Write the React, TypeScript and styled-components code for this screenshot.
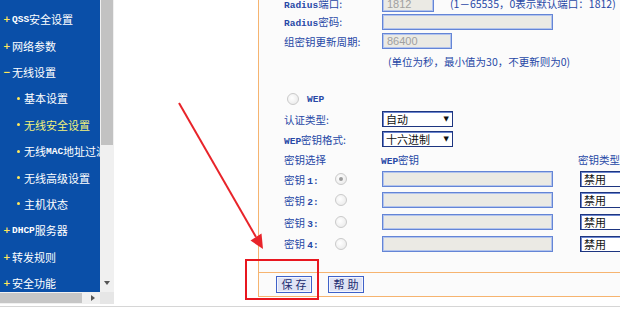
import styled, { createGlobalStyle } from "styled-components";

const GlobalStyle = createGlobalStyle`
  html, body {
    margin: 0;
    padding: 0;
    background: #fff;
  }
  body {
    font-family: "Noto Sans CJK SC", sans-serif;
  }
`;

const Page = styled.div`
  position: relative;
  width: 620px;
  height: 310px;
  overflow: hidden;
  background: #fff;
  display: flex;
  flex-direction: column;
`;

const Main = styled.div`
  display: flex;
  align-items: flex-start;
  height: 306px;
  flex-shrink: 0;
`;

const BottomRule = styled.div`
  height: 1px;
  background: #d6d6d6;
  flex-shrink: 0;
`;

/* ---------- left menu frame ---------- */

const SideFrame = styled.div`
  width: 114px;
  height: 304px;
  flex-shrink: 0;
  display: grid;
  grid-template-columns: 100px 14px;
  grid-template-rows: 292px 12px;
`;

const Menu = styled.ul`
  margin: 0;
  padding: 6px 0 0;
  list-style: none;
  background: #0a4fa8;
  overflow: hidden;
`;

const MenuItem = styled.li<{ $sub?: boolean; $active?: boolean }>`
  height: 26.4px;
  display: flex;
  align-items: center;
  padding-left: ${(p) => (p.$sub ? 15 : 3)}px;
  color: ${(p) => (p.$active ? "#f2f27a" : "#ffffff")};
  font-size: 11px;
  white-space: nowrap;
`;

const Marker = styled.span`
  width: 9px;
  flex-shrink: 0;
  display: flex;
  align-items: center;
  color: #ffe95a;
  font-size: 9px;
  font-weight: bold;
  font-family: "DejaVu Sans", sans-serif;
`;

const Dot = styled.span`
  width: 3px;
  height: 3px;
  margin-left: 2px;
  border-radius: 50%;
  background: #ffe95a;
`;

const Lat = styled.span`
  font-family: "Liberation Mono", monospace;
  font-size: 9.5px;
  font-weight: bold;
`;

const VScroll = styled.div`
  background: #f0f0f0;
  display: flex;
  flex-direction: column;
  align-items: center;
`;

const VThumb = styled.div`
  width: 12px;
  height: 145px;
  background: #c2c2c2;
`;

const Grow = styled.div`
  flex: 1;
`;

const ArrowDown = styled.div`
  width: 0;
  height: 0;
  margin-bottom: 7px;
  border-left: 3.5px solid transparent;
  border-right: 3.5px solid transparent;
  border-top: 4px solid #555;
`;

const HScroll = styled.div`
  background: #f0f0f0;
  display: flex;
  align-items: center;
`;

const HThumb = styled.div`
  width: 82px;
  height: 10px;
  background: #c6c6c6;
`;

const ArrowRight = styled.div`
  width: 0;
  height: 0;
  margin-left: 9px;
  border-top: 3.5px solid transparent;
  border-bottom: 3.5px solid transparent;
  border-left: 4px solid #555;
`;

const Corner = styled.div`
  background: #e6e6e6;
`;

const Blank = styled.div`
  width: 144px;
  flex-shrink: 0;
`;

/* ---------- content panel ---------- */

const Panel = styled.div`
  flex: 1;
  height: 297px;
  box-sizing: border-box;
  border-left: 1px solid #f6b470;
  border-bottom: 1px solid #f6b470;
  background: #fbfbfb;
  display: flex;
  flex-direction: column;
  overflow: hidden;
`;

const FormArea = styled.div`
  height: 272px;
  flex-shrink: 0;
  overflow: hidden;
  padding-left: 25px;
`;

const Form = styled.div`
  margin-top: -5px;
  display: flex;
  flex-direction: column;
`;

const Row = styled.div<{ $h: number; $pad?: number }>`
  height: ${(p) => p.$h}px;
  display: flex;
  align-items: center;
  padding-left: ${(p) => p.$pad ?? 0}px;
  white-space: nowrap;
  font-size: 10.5px;
  color: #2748a6;
`;

const Label = styled.div<{ $w?: number }>`
  width: ${(p) => p.$w ?? 98}px;
  flex-shrink: 0;
  color: #2748a6;
`;

const Input = styled.div<{ $w: number }>`
  width: ${(p) => p.$w}px;
  height: 16px;
  flex-shrink: 0;
  box-sizing: border-box;
  background: #ebeae4;
  border: 1px solid #6485d6;
  box-shadow: inset 0 0 0 1px #b3c4ec;
  padding-left: 4px;
  display: flex;
  align-items: center;
  font-family: "Liberation Sans", sans-serif;
  font-size: 11px;
  color: #a0a0a0;
`;

const Note = styled.span<{ $ml?: number }>`
  margin-left: ${(p) => p.$ml ?? 0}px;
  color: #2748a6;
`;

const Select = styled.div<{ $ml?: number }>`
  width: 71px;
  height: 16px;
  flex-shrink: 0;
  margin-left: ${(p) => p.$ml ?? 0}px;
  box-sizing: border-box;
  background: #fff;
  border: 1px solid #1d3580;
  box-shadow: inset 1px 1px 0 #6c86cf;
  padding: 0 3px;
  display: flex;
  align-items: center;
  justify-content: space-between;
  color: #111;
  font-size: 11px;
`;

const Caret = styled.span`
  font-family: "DejaVu Sans", sans-serif;
  font-size: 7px;
  color: #111;
`;

const Radio = styled.span<{ $checked?: boolean; $mr?: number }>`
  width: 12px;
  height: 12px;
  flex-shrink: 0;
  margin-right: ${(p) => p.$mr ?? 0}px;
  box-sizing: border-box;
  border-radius: 50%;
  border: 1px solid #cacaca;
  background: radial-gradient(circle at 40% 40%, #ffffff, #e6e6e6);
  display: flex;
  align-items: center;
  justify-content: center;
  &::after {
    content: "";
    width: 4px;
    height: 4px;
    border-radius: 50%;
    background: ${(p) => (p.$checked ? "#9c9c9c" : "transparent")};
  }
`;

const Footer = styled.div`
  flex: 1;
  border-top: 1px solid #f6b470;
  display: flex;
  align-items: flex-start;
  gap: 16px;
  padding: 3px 0 0 17px;
`;

const Button = styled.button`
  width: 36px;
  height: 17px;
  padding: 0;
  box-sizing: border-box;
  background: #dfe3f5;
  border: 1px solid #3f61c8;
  box-shadow: inset 0 0 0 1px #f4f6fd;
  color: #1b2a70;
  font-family: "Noto Sans CJK SC", sans-serif;
  font-size: 11px;
  letter-spacing: 3px;
  text-indent: 3px;
  line-height: 15px;
`;

/* ---------- annotation ---------- */

const Callout = styled.div`
  position: absolute;
  left: 245px;
  top: 259px;
  width: 74px;
  height: 41px;
  box-sizing: border-box;
  border: 2px solid #e8171f;
`;

const Pointer = styled.svg`
  position: absolute;
  left: 0;
  top: 0;
  pointer-events: none;
`;

const menu = [
  { text: "QSS安全设置", lat: "QSS", rest: "安全设置" },
  { text: "网络参数" },
  { text: "无线设置", open: true },
  { text: "基本设置", sub: true },
  { text: "无线安全设置", sub: true, active: true },
  { text: "无线MAC地址过滤", sub: true, lat: "MAC", pre: "无线", rest: "地址过滤" },
  { text: "无线高级设置", sub: true },
  { text: "主机状态", sub: true },
  { text: "DHCP服务器", lat: "DHCP", rest: "服务器" },
  { text: "转发规则" },
  { text: "安全功能" },
];

const keys = [
  { n: 1, h: 20, checked: true },
  { n: 2, h: 22 },
  { n: 3, h: 22 },
  { n: 4, h: 21 },
];

export default function App() {
  return (
    <Page>
      <GlobalStyle />
      <Main>
        <SideFrame>
          <Menu>
            {menu.map((m) => (
              <MenuItem key={m.text} $sub={m.sub} $active={m.active}>
                <Marker>{m.sub ? <Dot /> : m.open ? "−" : "+"}</Marker>
                {m.lat ? (
                  <>
                    {m.pre}
                    <Lat>{m.lat}</Lat>
                    {m.rest}
                  </>
                ) : (
                  m.text
                )}
              </MenuItem>
            ))}
          </Menu>
          <VScroll>
            <VThumb />
            <Grow />
            <ArrowDown />
          </VScroll>
          <HScroll>
            <HThumb />
            <ArrowRight />
          </HScroll>
          <Corner />
        </SideFrame>
        <Blank />
        <Panel>
          <FormArea>
            <Form>
              <Row $h={17}>
                <Label>
                  <Lat>Radius</Lat>端口:
                </Label>
                <Input $w={52}>1812</Input>
                <Note $ml={16}>(1－65535，0表示默认端口：1812)</Note>
              </Row>
              <Row $h={19}>
                <Label>
                  <Lat>Radius</Lat>密码:
                </Label>
                <Input $w={171} />
              </Row>
              <Row $h={20}>
                <Label>组密钥更新周期:</Label>
                <Input $w={70}>86400</Input>
              </Row>
              <Row $h={20} $pad={104}>
                <Note>(单位为秒，最小值为30，不更新则为0)</Note>
              </Row>
              <Row $h={18} />
              <Row $h={20} $pad={3}>
                <Radio $mr={8} />
                <Lat>WEP</Lat>
              </Row>
              <Row $h={20}>
                <Label>认证类型:</Label>
                <Select>
                  自动<Caret>▼</Caret>
                </Select>
              </Row>
              <Row $h={20}>
                <Label>
                  <Lat>WEP</Lat>密钥格式:
                </Label>
                <Select>
                  十六进制<Caret>▼</Caret>
                </Select>
              </Row>
              <Row $h={20}>
                <Label $w={97}>密钥选择</Label>
                <Label $w={197}>
                  <Lat>WEP</Lat>密钥
                </Label>
                <Label>密钥类型</Label>
              </Row>
              {keys.map((k) => (
                <Row $h={k.h} key={k.n}>
                  <Label $w={51}>
                    密钥 <Lat>{k.n}:</Lat>
                  </Label>
                  <Radio $checked={k.checked} $mr={35} />
                  <Input $w={171} />
                  <Select $ml={27}>禁用</Select>
                </Row>
              ))}
            </Form>
          </FormArea>
          <Footer>
            <Button>保存</Button>
            <Button>帮助</Button>
          </Footer>
        </Panel>
      </Main>
      <BottomRule />
      <Callout />
      <Pointer width="620" height="310" viewBox="0 0 620 310">
        <line x1="179" y1="103" x2="256" y2="237" stroke="#e8242a" strokeWidth="2" />
        <polygon points="263,249 250.5,240.5 261.5,233.5" fill="#e8242a" />
      </Pointer>
    </Page>
  );
}
